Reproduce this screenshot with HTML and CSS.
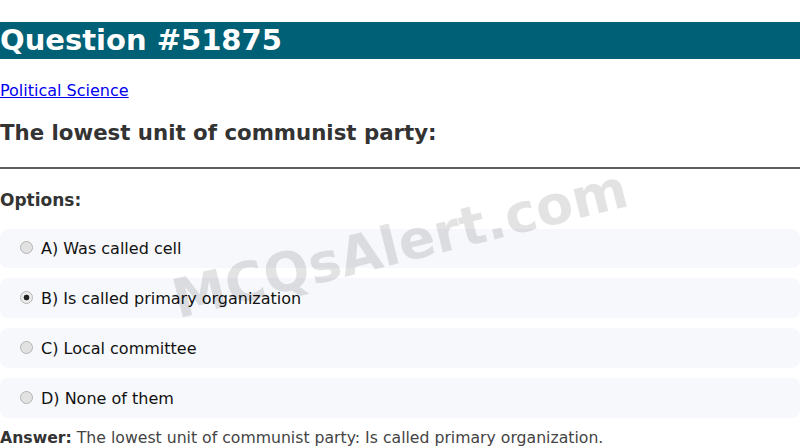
FILE: index.html
```html
<!DOCTYPE html>
<html>
<head>
<meta charset="utf-8">
<link rel="stylesheet" href="styles.css">
</head>
<body>
<div class="page">
  <h1 class="title">Question #51875</h1>
  <a class="cat" href="#">Political Science</a>
  <h2 class="question">The lowest unit of communist party:</h2>
  <hr class="rule">
  <h3 class="opts-title">Options:</h3>
  <div class="options">
    <label class="option"><span class="radio"></span>A) Was called cell</label>
    <label class="option"><span class="radio checked"></span>B) Is called primary organization</label>
    <label class="option"><span class="radio"></span>C) Local committee</label>
    <label class="option"><span class="radio"></span>D) None of them</label>
  </div>
  <p class="answer"><b>Answer:</b> The lowest unit of communist party: Is called primary organization.</p>
  <div class="watermark">MCQsAlert.com</div>
</div>
</body>
</html>
```

FILE: styles.css
```css
html, body {
  margin: 0;
  padding: 0;
  background: #fff;
}
body {
  font-family: "DejaVu Sans", Verdana, sans-serif;
  color: #333;
  overflow: hidden;
}
.page {
  position: relative;
  height: 448px;
}
.title {
  margin: 22px 0 0 0;
  height: 37px;
  line-height: 37px;
  background: #006076;
  color: #fff;
  font-size: 29px;
  font-weight: bold;
}
.cat {
  display: block;
  width: max-content;
  margin-top: 22px;
  font-size: 16px;
  line-height: 20px;
  color: #0000ee;
}
.question {
  margin: 19px 0 0 0;
  font-size: 21.3px;
  line-height: 26px;
  font-weight: bold;
  color: #333;
}
.rule {
  margin: 21px 0 0 0;
  border: 0;
  height: 2px;
  background: #5e5e5e;
}
.opts-title {
  margin: 21px 0 0 0;
  font-size: 17px;
  line-height: 20px;
  font-weight: bold;
  color: #333;
}
.options {
  display: flex;
  flex-direction: column;
  gap: 10.6px;
  margin-top: 18.5px;
}
.option {
  display: flex;
  align-items: center;
  height: 39.4px;
  padding-left: 20px;
  background: #f7f8fb;
  border-radius: 8px;
  font-size: 16px;
  color: #111;
}
.radio {
  box-sizing: border-box;
  width: 13px;
  height: 13px;
  margin-right: 8px;
  margin-top: -1px;
  border-radius: 50%;
  border: 1px solid #b4b4b4;
  background: #e2e2e2;
  flex: none;
}
.radio.checked {
  background: radial-gradient(circle, #222 0 2.6px, #ececec 3.2px 100%);
}
.answer {
  margin: 9.7px 0 0 0;
  font-size: 15.7px;
  line-height: 19px;
  color: #444;
}
.answer b {
  color: #333;
}
.watermark {
  position: absolute;
  left: 50%;
  top: 222px;
  font-size: 54px;
  font-weight: bold;
  color: rgba(0, 0, 0, 0.11);
  transform: translate(-50%, -50%) rotate(-14deg);
  white-space: nowrap;
  pointer-events: none;
}
```
